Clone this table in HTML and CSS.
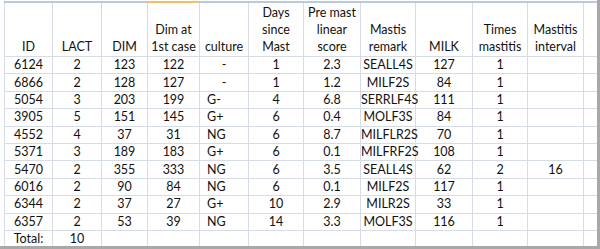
FILE: index.html
```html
<!DOCTYPE html>
<html>
<head>
<meta charset="utf-8">
<link rel="stylesheet" href="styles.css">
</head>
<body>
<div class="sheet">
<table class="grid">
<colgroup>
<col class="w48"><col class="w49"><col class="w46"><col class="w52"><col class="w49"><col class="w55"><col class="w57"><col class="w55"><col class="w57"><col class="w55"><col class="w56"><col class="w14">
</colgroup>
<thead>
<tr class="head">
<th>ID</th><th>LACT</th><th>DIM</th><th class="sel">Dim at<br>1st case</th><th>culture</th><th>Days<br>since<br>Mast</th><th>Pre mast<br>linear<br>score</th><th>Mastis<br>remark</th><th>MILK</th><th>Times<br>mastitis</th><th>Mastitis<br>interval</th><th></th>
</tr>
</thead>
<tbody>
<tr><td>6124</td><td>2</td><td>123</td><td>122</td><td>-</td><td>1</td><td>2.3</td><td>SEALL4S</td><td>127</td><td>1</td><td></td><td></td></tr>
<tr><td>6866</td><td>2</td><td>128</td><td>127</td><td>-</td><td>1</td><td>1.2</td><td>MILF2S</td><td>84</td><td>1</td><td></td><td></td></tr>
<tr><td>5054</td><td>3</td><td>203</td><td>199</td><td class="left">G-</td><td>4</td><td>6.8</td><td>SERRLF4S</td><td>111</td><td>1</td><td></td><td></td></tr>
<tr><td>3905</td><td>5</td><td>151</td><td>145</td><td class="left">G+</td><td>6</td><td>0.4</td><td>MOLF3S</td><td>84</td><td>1</td><td></td><td></td></tr>
<tr><td>4552</td><td>4</td><td>37</td><td>31</td><td class="left">NG</td><td>6</td><td>8.7</td><td>MILFLR2S</td><td>70</td><td>1</td><td></td><td></td></tr>
<tr><td>5371</td><td>3</td><td>189</td><td>183</td><td class="left">G+</td><td>6</td><td>0.1</td><td>MILFRF2S</td><td>108</td><td>1</td><td></td><td></td></tr>
<tr><td>5470</td><td>2</td><td>355</td><td>333</td><td class="left">NG</td><td>6</td><td>3.5</td><td>SEALL4S</td><td>62</td><td>2</td><td>16</td><td></td></tr>
<tr><td>6016</td><td>2</td><td>90</td><td>84</td><td class="left">NG</td><td>6</td><td>0.1</td><td>MILF2S</td><td>117</td><td>1</td><td></td><td></td></tr>
<tr><td>6344</td><td>2</td><td>37</td><td>27</td><td class="left">G+</td><td>10</td><td>2.9</td><td>MILR2S</td><td>33</td><td>1</td><td></td><td></td></tr>
<tr><td>6357</td><td>2</td><td>53</td><td>39</td><td class="left">NG</td><td>14</td><td>3.3</td><td>MOLF3S</td><td>116</td><td>1</td><td></td><td></td></tr>
<tr><td>Total:</td><td>10</td><td></td><td></td><td></td><td></td><td></td><td></td><td></td><td></td><td></td><td></td></tr>
</tbody>
</table>
</div>
</body>
</html>
```
FILE: styles.css
```css
html, body {
  margin: 0;
  padding: 0;
  background: #ffffff;
}
.sheet {
  width: 600px;
  height: 249px;
  overflow: hidden;
  box-sizing: border-box;
  padding: 1px 0 0 4px;
  border-right: 3px solid #a8a8a8;
  border-bottom: 3px solid #a8a8a8;
  position: relative;
}
.grid {
  border-collapse: collapse;
  table-layout: fixed;
  width: 593px;
  font-family: "Lato", "Liberation Sans", sans-serif;
  font-size: 12.5px;
  color: #111;
  border-top: 2px solid #b9c9df;
}
.w48 { width: 48px; }
.w49 { width: 49px; }
.w46 { width: 46px; }
.w52 { width: 52px; }
.w55 { width: 55px; }
.w56 { width: 56px; }
.w57 { width: 57px; }
.w14 { width: 14px; }
.grid th, .grid td {
  border: 1px solid #d5dce8;
  padding: 0;
  text-align: center;
  white-space: nowrap;
  overflow: visible;
}
.grid th {
  font-weight: normal;
  vertical-align: bottom;
  height: 52px;
  line-height: 17px;
  padding-bottom: 1px;
}
.grid th.sel {
  border-top: 2px solid #f6bd67;
}
.grid td {
  height: 16.4px;
  line-height: 16px;
}
.grid td.left {
  text-align: left;
  padding-left: 7px;
}
```
